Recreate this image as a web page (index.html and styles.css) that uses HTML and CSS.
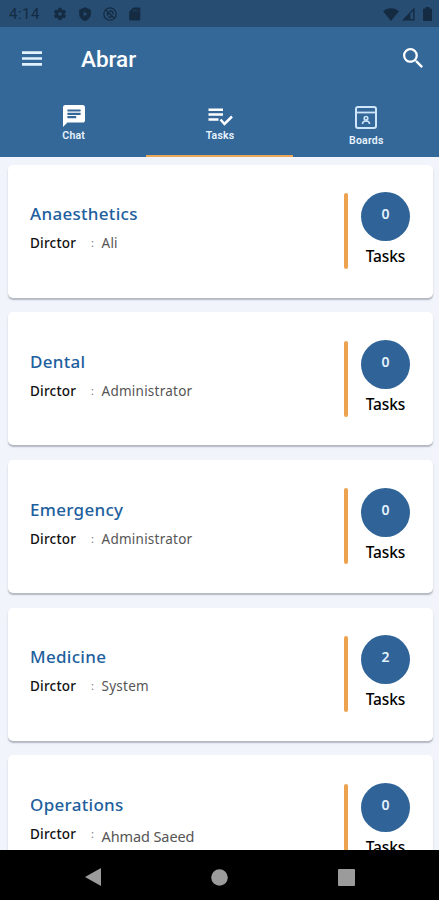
FILE: index.html
```html
<!DOCTYPE html>
<html lang="en">
<head>
<meta charset="utf-8">
<title>Abrar</title>
<link rel="stylesheet" href="styles.css">
</head>
<body>
<div class="screen">
  <div class="status">
    <span class="clock">4:14</span>
    <svg class="status-icon" viewBox="0 0 24 24"><path fill-rule="evenodd" stroke="#142b42" d="M19.400 13a7.500 7.500 0 0 0 0-2l2.100-1.600c.2-.2.3-.4.100-.7l-2-3.400c-.1-.2-.4-.3-.6-.2l-2.500 1a7.300 7.300 0 0 0-1.700-1l-.4-2.600c0-.3-.2-.5-.5-.5h-4c-.2 0-.5.2-.5.4L9 5.100a7.300 7.300 0 0 0-1.700 1l-2.500-1c-.2-.1-.5 0-.6.200l-2 3.400c-.1.300-.1.500.100.700L4.500 11a7.500 7.500 0 0 0 0 2l-2.200 1.600c-.2.200-.2.400-.1.700l2 3.400c.1.200.4.300.6.200l2.500-1a7.300 7.300 0 0 0 1.700 1l.4 2.600c0 .3.300.5.500.5h4c.3 0 .5-.2.500-.4l.4-2.700a7.300 7.300 0 0 0 1.700-1l2.500 1c.2.100.5 0 .6-.2l2-3.400c.1-.3.1-.5-.1-.7zM12 15.600a3.600 3.600 0 1 1 0-7.200 3.600 3.600 0 0 1 0 7.200z"/></svg>
    <svg class="status-icon" viewBox="0 0 24 24"><path fill-rule="evenodd" stroke="#142b42" d="M12 1 2.500 5v7c0 5.500 4 10 9.500 11.500 5.500-1.500 9.500-6 9.500-11.500V5zM9 7v10l8-5z"/></svg>
    <svg class="status-icon" viewBox="0 0 24 24"><circle cx="12" cy="12" r="10.600" fill="none" stroke="#142b42" stroke-width="2.200"/><path d="M5 5l14 14M8 15V9.500M11 7.500c4-2 7 1 6 5M9 17c3 1.500 6 0 6-1" fill="none" stroke="#142b42" stroke-width="2.500"/></svg>
    <svg class="status-icon" viewBox="0 0 24 24"><path fill-rule="evenodd" d="M9 1h10c1.200 0 2 .8 2 2v18c0 1.200-.8 2-2 2H4c-1.200 0-2-.8-2-2V8zM9 4.500v3h1.500v-3zm3.500 0v3H14v-3zm3.500 0v3h1.500v-3z"/></svg>
    <span class="spacer"></span>
    <svg class="wifi" viewBox="0 0 16 13"><path d="M0 3.200C4.500-.8 11.500-.8 16 3.200L8 13z"/></svg>
    <svg class="signal" viewBox="0 0 14 14"><path fill-rule="evenodd" d="M0 14 13.500 0v14zM9 6.500v6h3V3.500z"/></svg>
    <svg class="battery" viewBox="0 0 9 14"><path d="M2.500 0h4v1.500H8q1 0 1 1V13q0 1-1 1H1q-1 0-1-1V2.500q0-1 1-1h1.500z"/></svg>
  </div>

  <header class="appbar">
    <svg class="menu" viewBox="0 0 21 15"><path d="M0 0h21v2.700H0zm0 6.100h21v2.700H0zm0 6.200h21V15H0z"/></svg>
    <h1>Abrar</h1>
    <svg class="search" viewBox="3 3 17.500 17.500"><path d="M15.500 14h-.79l-.28-.27A6.470 6.470 0 0 0 16 9.500 6.500 6.500 0 1 0 9.500 16c1.610 0 3.090-.59 4.230-1.570l.27.280v.79l5 4.990L20.490 19zm-6 0C7.010 14 5 11.990 5 9.500S7.010 5 9.500 5 14 7.010 14 9.500 11.990 14 9.500 14z"/></svg>
  </header>

  <nav class="tabs">
    <a class="tab chat">
      <svg width="22" height="22" viewBox="2 2 20 20"><path d="M20 2H4c-1.100 0-1.990.9-1.990 2L2 22l4-4h14c1.100 0 2-.9 2-2V4c0-1.100-.9-2-2-2zM6 9h12v2H6zm8 5H6v-2h8zm4-6H6V6h12z"/></svg>
      <span>Chat</span>
    </a>
    <a class="tab tasks active">
      <svg width="25" height="18" viewBox="0 0 25 18"><path d="M.5.500H15V3H.5zm0 4.800H15v2.500H.5zm0 4.900h10v2.500H.5z"/><path d="m12.500 11.500 4 4.500 7.500-7.500" fill="none" stroke="#fff" stroke-width="2.500"/></svg>
      <span>Tasks</span>
    </a>
    <a class="tab boards">
      <svg width="22" height="23" viewBox="0 0 22 23" fill="none" stroke="#cfe6fa"><rect x="1" y="1" width="20" height="21" rx="2" stroke-width="2"/><path d="M1 6.500h20" stroke-width="1.800"/><circle cx="11" cy="12.300" r="1.800" stroke-width="1.600"/><path d="M7.500 18q0-3 3.500-3t3.500 3" stroke-width="1.600"/></svg>
      <span>Boards</span>
    </a>
  </nav>

  <main class="list">
    <article class="card">
      <div class="info"><h2>Anaesthetics</h2><p><b>Dirctor</b><i>:</i><span>Ali</span></p></div>
      <div class="rule"></div>
      <div class="count"><div class="badge">0</div><div class="label">Tasks</div></div>
    </article>
    <article class="card">
      <div class="info"><h2>Dental</h2><p><b>Dirctor</b><i>:</i><span>Administrator</span></p></div>
      <div class="rule"></div>
      <div class="count"><div class="badge">0</div><div class="label">Tasks</div></div>
    </article>
    <article class="card">
      <div class="info"><h2>Emergency</h2><p><b>Dirctor</b><i>:</i><span>Administrator</span></p></div>
      <div class="rule"></div>
      <div class="count"><div class="badge">0</div><div class="label">Tasks</div></div>
    </article>
    <article class="card">
      <div class="info"><h2>Medicine</h2><p><b>Dirctor</b><i>:</i><span>System</span></p></div>
      <div class="rule"></div>
      <div class="count"><div class="badge">2</div><div class="label">Tasks</div></div>
    </article>
    <article class="card">
      <div class="info"><h2>Operations</h2><p><b>Dirctor</b><i>:</i><span class="long">Ahmad Saeed</span></p></div>
      <div class="rule"></div>
      <div class="count"><div class="badge">0</div><div class="label">Tasks</div></div>
    </article>
  </main>

  <footer class="navbar">
    <svg width="16" height="18" viewBox="0 0 16 18"><path d="M16 0v18L0 9z"/></svg>
    <svg width="17" height="17" viewBox="0 0 17 17"><circle cx="8.500" cy="8.500" r="8.300"/></svg>
    <svg width="17" height="17" viewBox="0 0 17 17"><rect width="17" height="17" rx="1"/></svg>
  </footer>
</div>
</body>
</html>
```
FILE: styles.css
```css
* { box-sizing: border-box; }
body { margin: 0; font-family: "Noto Sans", sans-serif; }
h1, h2, p { margin: 0; }
svg { display: block; flex: none; }
.screen { width: 439px; height: 900px; display: flex; flex-direction: column; overflow: hidden; background: #f1f4fb; }

.status { flex: none; height: 27px; display: flex; align-items: center; padding: 1px 7px 0 9px; background: #274d72; fill: #142b42; }
.clock { width: 44px; font: 400 15px/20px Roboto, sans-serif; letter-spacing: .5px; color: #142b42; }
.status-icon { width: 14px; height: 14px; margin-right: 11px; }
.spacer { flex: 1; }
.wifi { width: 16px; height: 13px; margin-right: 3px; }
.signal { width: 13px; height: 14px; margin-right: 8px; }
.battery { width: 9px; height: 14px; }

.appbar { flex: none; height: 65px; display: flex; align-items: center; padding: 0 16px 2px 22px; background: #346899; fill: #fff; }
.menu { width: 20px; height: 15px; fill: #e4f2ff; }
.appbar h1 { flex: 1; margin: 1px 0 0 39px; font: 500 22.500px/28px Roboto, sans-serif; color: #fff; }
.search { width: 20px; height: 20px; margin-bottom: 1px; }

.tabs { flex: none; height: 65px; display: grid; grid-template-columns: repeat(3, 1fr); background: #346899; fill: #fff; }
.tab { display: flex; flex-direction: column; align-items: center; border-bottom: 2px solid #346899; color: #e8f3ff; font: 600 10.500px/13px Roboto, sans-serif; letter-spacing: .2px; }
.tab span { padding-left: 1px; }
.tab svg { margin-left: 1px; }
.chat { padding-top: 13px; gap: 2px; }
.tasks { padding-top: 16px; gap: 3px; }
.tasks svg { margin-left: 2px; }
.boards { padding-top: 14px; gap: 5px; }
.active { border-bottom-color: #eba758; }

.list { flex: 1; min-height: 0; overflow: hidden; display: flex; flex-direction: column; gap: 14.700px; padding: 7.500px 6px 0 8px; }
.card { flex: none; height: 133px; display: flex; background: #fff; border-radius: 5px; box-shadow: 0 2px 1.500px rgba(60, 65, 75, .34); }
.info { flex: 1; padding: 37.900px 0 0 22px; }
.info h2 { font-size: 17px; line-height: 24px; font-weight: 500; color: #1d609d; letter-spacing: .3px; white-space: nowrap; }
.info p { display: flex; margin-top: 7px; font-size: 13.500px; line-height: 20px; white-space: nowrap; }
.info b { width: 61px; font-weight: 500; color: #111; letter-spacing: .2px; }
.info i { width: 10.500px; font-style: normal; font-size: 11px; color: #777; }
.info span { color: #555; letter-spacing: .25px; }
.info .long { font-size: 14.500px; letter-spacing: -.1px; position: relative; top: 2px; }
.rule { width: 4px; height: 76px; margin-top: 28.500px; border-radius: 2px; background: #eda24f; }
.count { width: 49px; margin: 27.800px 23px 0 13px; text-align: center; }
.badge { width: 49px; height: 49px; border-radius: 50%; background: #306498; color: #e5f2ff; font-size: 14px; line-height: 43px; font-weight: 600; }
.label { margin-top: 3px; font-size: 15.500px; line-height: 24px; font-weight: 550; letter-spacing: -.1px; color: #000; }

.navbar { flex: none; height: 50px; display: flex; align-items: center; justify-content: space-between; padding: 4px 84px 0 85px; background: #000; fill: #9b9b9b; }
```
